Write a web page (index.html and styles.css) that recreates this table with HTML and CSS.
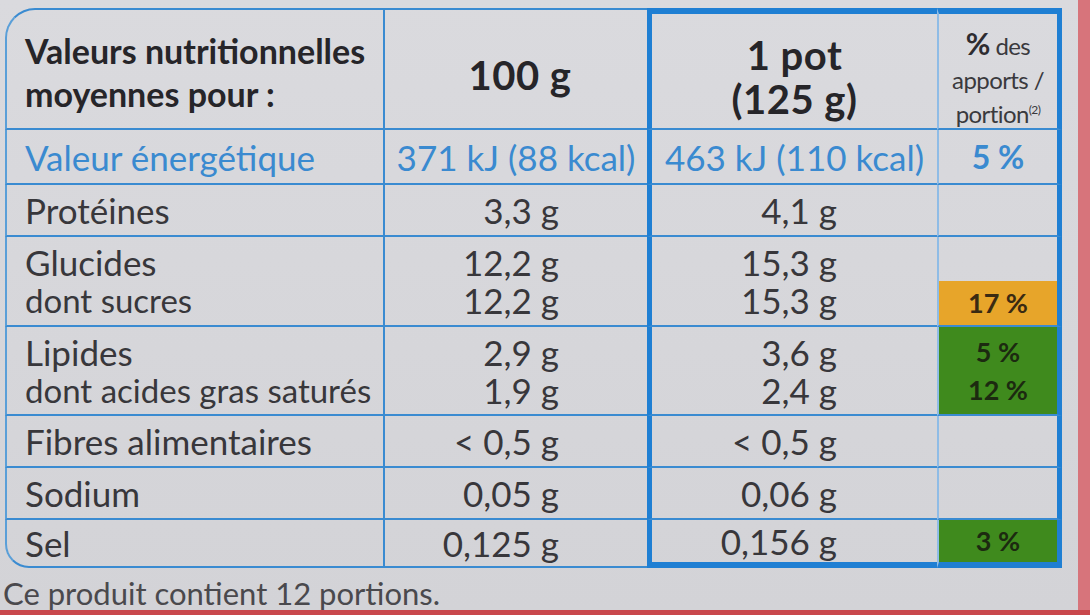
FILE: index.html
```html
<!DOCTYPE html>
<html lang="fr">
<head>
<meta charset="utf-8">
<title>Valeurs nutritionnelles</title>
<link rel="stylesheet" href="styles.css">
</head>
<body>
<div class="page">
  <div class="main">
    <div class="label">
      <div class="cell c1 head first"><div>Valeurs nutritionnelles<br>moyennes pour :</div></div>
      <div class="cell c2 head bold big">100 g</div>
      <div class="cell c3 head bold big"><div>1 pot<br>(125 g)</div></div>
      <div class="cell c4 head small"><div><b>%</b> des<br>apports /<br>portion<sup>(2)</sup></div></div>

      <div class="cell c1 blue">Valeur énergétique</div>
      <div class="cell c2 blue center">371 kJ (88 kcal)</div>
      <div class="cell c3 blue center">463 kJ (110 kcal)</div>
      <div class="cell c4 blue center bold pct">5 %</div>

      <div class="cell c1">Protéines</div>
      <div class="cell c2 num">3,3 g</div>
      <div class="cell c3 num">4,1 g</div>
      <div class="cell c4"></div>

      <div class="cell c1 two"><span>Glucides</span><span class="sub">dont sucres</span></div>
      <div class="cell c2 num two"><span>12,2 g</span><span>12,2 g</span></div>
      <div class="cell c3 num two"><span>15,3 g</span><span>15,3 g</span></div>
      <div class="cell c4 split"><span class="pad"></span><span class="orange">17 %</span></div>

      <div class="cell c1 two"><span>Lipides</span><span class="sub">dont acides gras saturés</span></div>
      <div class="cell c2 num two"><span>2,9 g</span><span>1,9 g</span></div>
      <div class="cell c3 num two"><span>3,6 g</span><span>2,4 g</span></div>
      <div class="cell c4 green two"><span>5 %</span><span>12 %</span></div>

      <div class="cell c1">Fibres alimentaires</div>
      <div class="cell c2 num">&lt; 0,5 g</div>
      <div class="cell c3 num">&lt; 0,5 g</div>
      <div class="cell c4"></div>

      <div class="cell c1">Sodium</div>
      <div class="cell c2 num">0,05 g</div>
      <div class="cell c3 num">0,06 g</div>
      <div class="cell c4"></div>

      <div class="cell c1 last">Sel</div>
      <div class="cell c2 num last">0,125 g</div>
      <div class="cell c3 num last">0,156 g</div>
      <div class="cell c4 last green">3 %</div>
    </div>
    <p class="note">Ce produit contient 12 portions.</p>
  </div>
  <div class="strip"></div>
</div>
<div class="bottom"></div>
</body>
</html>
```

FILE: styles.css
```css
* { box-sizing: border-box; }
html, body { margin: 0; padding: 0; }
body {
  width: 1090px;
  height: 615px;
  overflow: hidden;
  background: #d5d5d9;
  font-family: Lato, "Open Sans", sans-serif;
  color: #38373b;
}
.page {
  display: flex;
  height: 610px;
}
.main {
  flex: 1;
  padding: 8px 0 0 5px;
  background: linear-gradient(180deg, #dadade 0%, #d3d3d7 100%);
}
.strip {
  width: 12px;
  background: #d7747b;
}
.bottom {
  height: 5px;
  background: #c9484c;
}
.label {
  display: grid;
  grid-template-columns: 380px 262px 290px 125px;
  grid-template-rows: 122px 55px 52px 90px 89px 52px 52px 48px;
}
.cell {
  border-bottom: 2px solid #3a8bd1;
  display: flex;
  align-items: center;
  font-size: 35px;
  line-height: 38px;
  white-space: nowrap;
}
.c1 {
  border-left: 2px solid #5a9fd8;
  border-right: 2px solid #3a8bd1;
  padding-left: 18px;
}
.c2 {
  justify-content: flex-end;
  padding-right: 88px;
}
.c3 {
  border-left: 5px solid #1f7fd3;
  justify-content: flex-end;
  padding-right: 100px;
}
.c4 {
  border-left: 2px solid #8fbce6;
  border-right: 5px solid #1f7fd3;
  justify-content: center;
}
.head { border-top: 2px solid #3a8bd1; }
.c3.head, .c4.head { border-top: 6px solid #1f7fd3; }
.first {
  border-top-left-radius: 30px;
  font-weight: 700;
  color: #262529;
  font-size: 34px;
  line-height: 43px;
  padding-top: 6px;
}
.last.c1 { border-bottom-left-radius: 24px; }
.c3.last, .c4.last { border-bottom: 6px solid #1f7fd3; }
.bold { font-weight: 700; color: #262529; }
.c2.head, .c3.head {
  justify-content: center;
  padding-right: 0;
  text-align: center;
  line-height: 44px;
  padding-top: 12px;
}
.big { font-size: 40px; letter-spacing: 0.5px; }
.c2.big { padding-left: 8px; }
.small {
  font-size: 24px;
  line-height: 34px;
  letter-spacing: -0.6px;
  text-align: center;
  padding-top: 14px;
  color: #3a393d;
}
.small b { font-size: 30px; color: #2d2c30; }
.small sup { font-size: 12px; line-height: 0; }
.blue { color: #3a8ad0; }
.center { justify-content: center; padding-right: 0; }
.pct { font-size: 32px; }
.two {
  flex-direction: column;
  align-items: flex-start;
  justify-content: center;
}
.c2.two, .c3.two { align-items: flex-end; }
.c4.two { align-items: center; }
.sub { font-size: 33px; }
.split {
  flex-direction: column;
  align-items: stretch;
}
.split .pad { flex: 1; }
.orange {
  flex: 1;
  background: #e7a52a;
  display: flex;
  align-items: center;
  justify-content: center;
  font-size: 27px;
  font-weight: 700;
  color: #3a2a12;
}
.green {
  background: #3f8a1d;
  font-size: 27px;
  font-weight: 700;
  color: #1c2a10;
  line-height: 38px;
}
.note {
  margin: 6px 0 0 -2px;
  font-size: 31px;
  color: #4a494d;
}
```
